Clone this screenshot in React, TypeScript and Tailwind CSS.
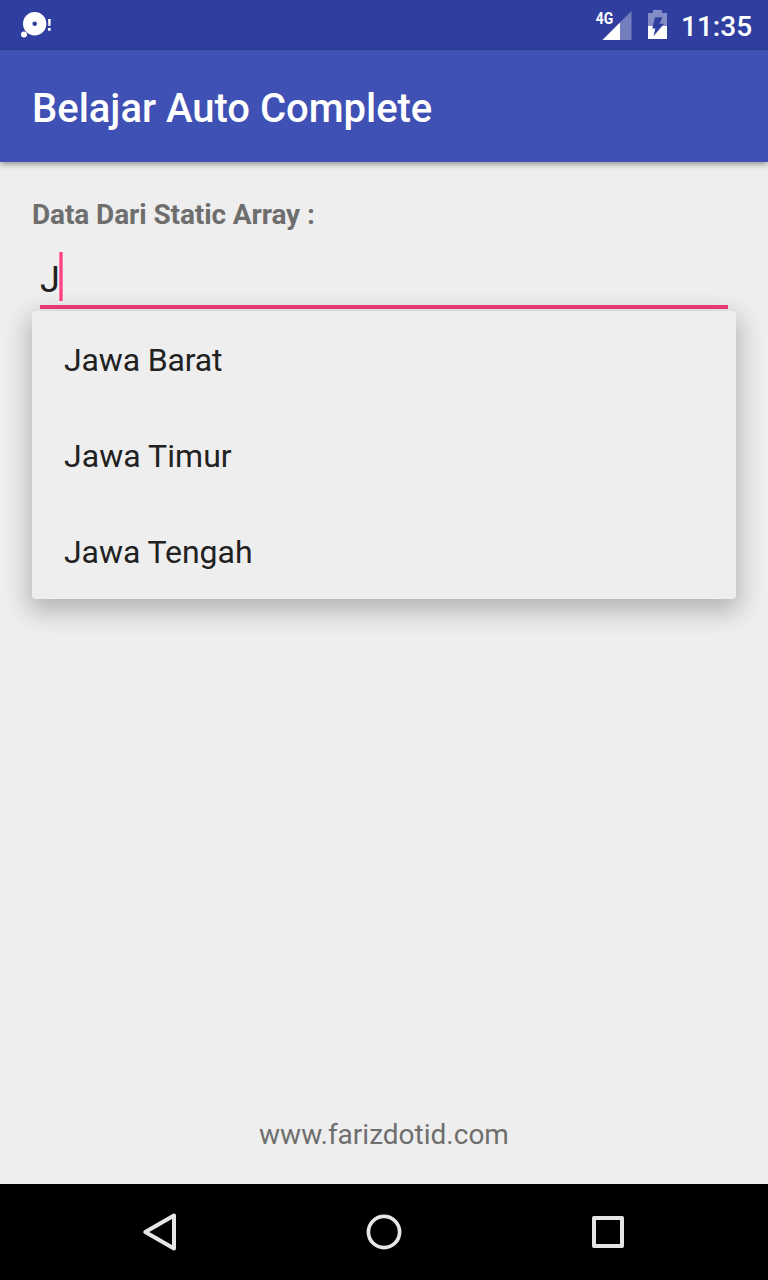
const suggestions = [
  { label: 'Jawa Barat', tracking: 'tracking-[-0.15px]' },
  { label: 'Jawa Timur', tracking: 'tracking-[0.05px]' },
  { label: 'Jawa Tengah', tracking: 'tracking-[-0.05px]' },
];

function StatusBar() {
  return (
    <div className="flex h-[50px] shrink-0 items-start bg-[#303f9f] pr-4 pl-5 text-white">
      <svg className="mt-[10px] h-[30px] w-[34px]" viewBox="20 10 34 30">
        <circle cx="34.700" cy="23.700" r="11.700" fill="#fff" />
        <circle cx="34.700" cy="23.700" r="2.300" fill="#303f9f" />
        <circle cx="24" cy="34.500" r="3" fill="#fff" />
        <path d="M48 19h2.800l-.4 7h-2zM48 28h2.700v2.700H48z" fill="#fff" />
      </svg>
      <svg className="mt-[8px] ml-auto h-[34px] w-[38px]" viewBox="594 8 38 34">
        <path d="M631.500 11v29h-29z" fill="#747dbd" />
        <path d="M620 22.500V40h-17.500z" fill="#fff" />
        <text
          x="595.8"
          y="23.5"
          fill="#fff"
          fontFamily="Roboto"
          fontWeight="700"
          fontSize="16.500"
          textLength="17.5"
          lengthAdjust="spacingAndGlyphs"
        >
          4G
        </text>
      </svg>
      <svg className="mt-[8px] ml-[14px] h-[34px] w-[24px]" viewBox="646 8 24 34">
        <path d="M653 10h9v3h5v13h-19V13h5z" fill="#838cc5" />
        <path d="M648 26h19v13h-19z" fill="#fff" />
        <path d="M655 17.300h7.500l-3 6.500h4.500L653.500 36.200l1.800-7.700h-3z" fill="#303f9f" />
      </svg>
      <span className="mt-[6px] ml-[11px] w-[71px] text-[28px] leading-[42px] font-medium">11:35</span>
    </div>
  );
}

function NavigationBar() {
  return (
    <nav className="flex h-24 shrink-0 items-center justify-between bg-black px-[136px]">
      <svg className="h-12 w-12" viewBox="136 1208 48 48" fill="none" stroke="#e6e6e6" strokeWidth="4" strokeLinejoin="round">
        <path d="M174 1215.500v33l-28.700-16.500z" />
      </svg>
      <svg className="h-12 w-12" viewBox="0 0 48 48" fill="none" stroke="#e6e6e6" strokeWidth="3.700">
        <circle cx="24" cy="24" r="15.600" />
      </svg>
      <svg className="h-12 w-12" viewBox="0 0 48 48" fill="none" stroke="#e6e6e6" strokeWidth="4" strokeLinejoin="round">
        <path d="M10 10h28v28H10z" />
      </svg>
    </nav>
  );
}

export default function App() {
  return (
    <div className="flex h-[1280px] w-[768px] flex-col overflow-hidden bg-[#eeeeee] font-[Roboto,sans-serif]">
      <StatusBar />
      <header className="z-10 flex h-28 shrink-0 items-center bg-[#3f51b5] px-8 shadow-[0_2px_6px_rgba(0,0,0,0.4)]">
        <h1 className="pt-1.5 text-[40px] font-medium tracking-[-0.02px] text-white">Belajar Auto Complete</h1>
      </header>
      <main className="flex flex-1 flex-col px-8">
        <p className="mt-[33px] text-[28px] leading-[40px] font-bold tracking-[-0.1px] text-[#6e6e6e]">
          Data Dari Static Array :
        </p>
        <div className="mx-2 mt-4 flex h-[58px] items-start border-b-4 border-[#f03e7b]">
          <span className="w-[19px] text-[36px] leading-[58px] text-[#212121]">J</span>
          <i className="mt-px h-[49px] w-1 border-x border-[#ff7ca8] bg-[#ff4081]" />
        </div>
        <ul className="mt-[2px] rounded-[4px] bg-[#eeeeee] shadow-[0_9px_24px_4px_rgba(0,0,0,0.24)]">
          {suggestions.map(({ label, tracking }) => (
            <li key={label} className="flex h-24 items-center px-8 pt-[2px] text-[32px] text-[#212121]">
              <span className={tracking}>{label}</span>
            </li>
          ))}
        </ul>
        <p className="mt-auto mb-7 text-center text-[28px] text-[#6e6e6e]">www.farizdotid.com</p>
      </main>
      <NavigationBar />
    </div>
  );
}
